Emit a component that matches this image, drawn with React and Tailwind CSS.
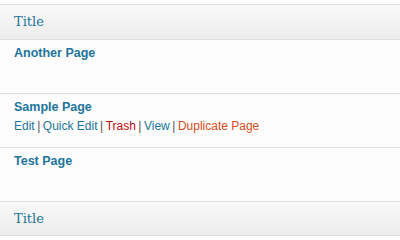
import React from 'react';

const rows = [
  { title: 'Another Page' },
  { title: 'Sample Page', actions: true },
  { title: 'Test Page' },
];

const Sep = () => <span className="text-[#555] mx-[2.5px]">|</span>;

const HeaderRow = ({ last }) => (
  <div
    className={`h-[35px] flex items-center px-[14px] bg-gradient-to-b from-[#f9f9f9] to-[#ececec] border-t border-[#dfdfdf] ${last ? 'border-b' : ''}`}
  >
    <span className="text-[13px] text-[#21759b]" style={{ fontFamily: '"DejaVu Serif", Georgia, serif' }}>
      Title
    </span>
  </div>
);

export default function App() {
  return (
    <div className="w-[400px] h-[240px] bg-white overflow-hidden pt-[4px]" style={{ fontFamily: '"Liberation Sans", Arial, sans-serif' }}>
      <HeaderRow />
      {rows.map((row) => (
        <div key={row.title} className="h-[54px] border-t border-[#dfdfdf] bg-[#fcfcfc] px-[14px] pt-[4px]">
          <div className="text-[12.5px] font-bold text-[#21759b] leading-[18px]">{row.title}</div>
          {row.actions && (
            <div className="text-[12px] leading-[18px] mt-[1px] whitespace-pre">
              <span className="text-[#21759b]">Edit</span>
              <Sep />
              <span className="text-[#21759b]">Quick Edit</span>
              <Sep />
              <span className="text-[#bc0b0b]">Trash</span>
              <Sep />
              <span className="text-[#21759b]">View</span>
              <Sep />
              <span className="text-[#d54e21]">Duplicate Page</span>
            </div>
          )}
        </div>
      ))}
      <HeaderRow last />
    </div>
  );
}
